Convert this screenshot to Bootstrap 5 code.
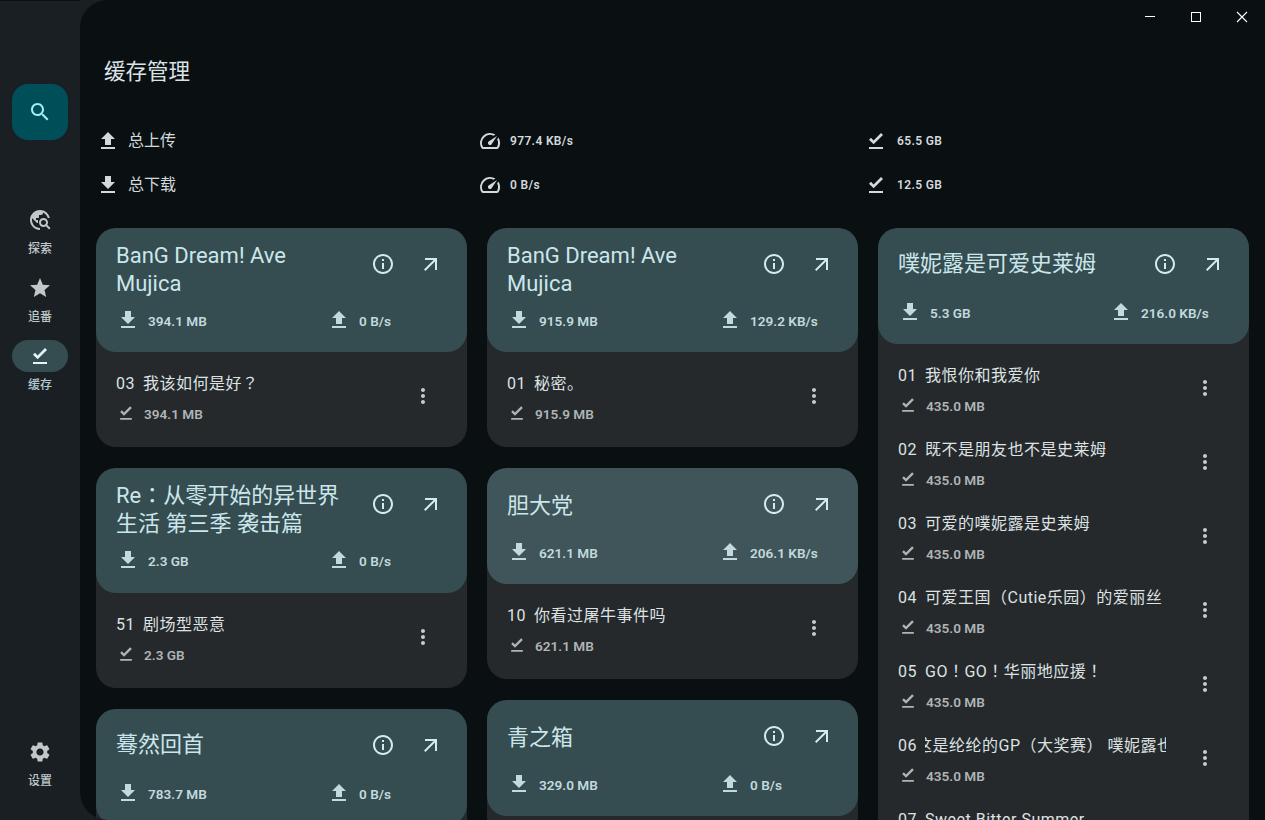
<!DOCTYPE html>
<html lang="zh-CN">
<head>
    <meta charset="UTF-8">
    <meta name="viewport" content="width=device-width, initial-scale=1.0">
    <title>缓存管理</title>
    <link href="https://cdn.jsdelivr.net/npm/bootstrap@5.3.3/dist/css/bootstrap.min.css" rel="stylesheet">
    <style>
        html, body { height: 820px; overflow: hidden; }
        body {
            background: #191f22;
            font-family: "Roboto", "Noto Sans CJK SC", sans-serif;
            color: #dfe3e4;
        }
        .ic { width: 24px; height: 24px; fill: currentColor; flex: none; display: block; }
        .punct { font-family: "Noto Sans CJK TC", sans-serif; line-height: 1; }

        /* side rail */
        .rail { width: 80px; height: 820px; flex: none; border-top: 1px solid #0c1012; }
        .fab { width: 56px; height: 56px; margin: 83px 0 0 12px; border-radius: 16px; background: #004f58; color: #9eeffd; }
        .rail-item { width: 80px; color: #c0c8ca; font-size: 12px; font-weight: 500; line-height: 16px; }
        .rail-pill { width: 56px; height: 32px; border-radius: 16px; }
        .rail-item.active { color: #b1cbd0; }
        .rail-item.active .rail-pill { background: #354c50; color: #e2f4f7; }
        .rail-label { margin-top: 5px; }
        .rail-top { margin-top: 64px; gap: 15px; }
        .rail-bottom { padding-bottom: 31px; }

        /* main panel */
        .panel {
            flex: 1;
            height: 820px;
            background: #0a0f12;
            border-radius: 28px 0 0 28px;
            border-top: 1px solid #0c1012;
            padding: 56px 0 0 16px;
            overflow: hidden;
        }
        .page-title { font-size: 21.5px; line-height: 30px; margin-left: 8px; color: #dbe3e5; }
        .totals { margin-top: 32px; display: grid; grid-template-columns: 382px 386px 1fr; }
        .total-cell { height: 44px; color: #d3dadc; }
        .total-cell .ic { margin-right: 8px; }
        .total-cjk { font-size: 16px; }
        .total-num { font-size: 12px; font-weight: 600; letter-spacing: .35px; }
        .total-done .ic { margin-right: 9px; }

        /* columns of cards */
        .board { margin-top: 21px; gap: 20px; }
        .board-col { width: 371px; gap: 21px; flex: none; }
        .task { background: #25292c; border-radius: 20px; }
        .task-head { background: #354c50; color: #c8e5ea; border-radius: 20px; padding: 12px 0 20px 20px; }
        .task-head.hovered { background: #3f5559; }
        .task-row { min-height: 48px; }
        .task-head.tall { padding-bottom: 21px; }
        .task-head.tall .task-row { min-height: 57px; }
        .task-head.tall .task-title { margin: 1px 0 -1px; }
        .task-head.tall .task-stats { margin-top: 11px; }
        .task-title { width: 240px; font-size: 22px; line-height: 28px; color: #cbe6eb; margin: 2px 0 -2px; }
        .task-head.lifted .task-title { margin: 0; }
        .task-tools { width: 111px; margin-top: 4px; height: 40px; padding-left: 15px; gap: 24px; color: #d3eaee; }
        .task-stats { margin-top: 12px; height: 24px; font-size: 13.6px; font-weight: 600; color: #c2dade; }
        .task-stats span { padding-top: 2px; }
        .stat-one { width: 211px; }
        .task-stats .ic { margin-right: 8px; }
        .task-list { padding: 7px 0 14px; }
        .ep { height: 74px; padding-left: 20px; }
        .ep-main { width: 287px; flex: none; }
        .ep-top { height: 24px; margin-top: 13px; font-size: 16px; letter-spacing: .5px; line-height: 24px; color: #dde2e3; }
        .ep-no { width: 27px; flex: none; }
        .ep-name { width: 241px; overflow: hidden; white-space: nowrap; flex: none; }
        .ep-name.scrolled span { margin-left: -9px; display: inline-block; }
        .ep-name.scrolled .punct { margin: 0; }
        .ep-size { height: 24px; margin-top: 5px; font-size: 13.6px; font-weight: 600; color: #aeb5b6; }
        .ep-size span { padding-top: 2px; }
        .ep-size .ic { width: 20px; height: 20px; margin: 0 8px 0 0; }
        .ep-more { margin-left: 8px; color: #c6cbcd; }

        /* window buttons */
        .winbtns { position: absolute; top: 0; right: 0; width: 138px; height: 32px; }
        .winbtns svg { position: absolute; top: 11px; }
    </style>
</head>
<body class="d-flex">

    <svg width="0" height="0" class="position-absolute">
        <symbol id="i-search" viewBox="0 0 24 24"><path d="M15.5 14h-.79l-.28-.27C15.41 12.59 16 11.11 16 9.5 16 5.91 13.09 3 9.5 3S3 5.91 3 9.5 5.91 16 9.5 16c1.61 0 3.09-.59 4.23-1.57l.27.28v.79l5 4.99L20.49 19l-4.99-5zm-6 0C7.01 14 5 11.99 5 9.5S7.01 5 9.5 5 14 7.01 14 9.5 11.99 14 9.5 14z"/></symbol>
        <symbol id="i-explore" viewBox="0 0 24 24"><path d="M19.3 16.9c.4-.7.7-1.5.7-2.4 0-2.5-2-4.5-4.5-4.5S11 12 11 14.5s2 4.5 4.5 4.5c.9 0 1.7-.3 2.4-.7l3.2 3.2 1.4-1.4-3.2-3.2zm-3.8.1c-1.4 0-2.5-1.1-2.5-2.5s1.1-2.5 2.5-2.5 2.5 1.1 2.5 2.5-1.1 2.5-2.5 2.5zM12 20v2C6.48 22 2 17.52 2 12S6.48 2 12 2c4.84 0 8.87 3.44 9.8 8h-2.07c-.64-2.46-2.4-4.47-4.73-5.41V5c0 1.1-.9 2-2 2h-2v2c0 .55-.45 1-1 1H8v2h2v3H9l-4.79-4.79C4.08 10.79 4 11.38 4 12c0 4.41 3.59 8 8 8z"/></symbol>
        <symbol id="i-star" viewBox="0 0 24 24"><path d="M12 17.27L18.18 21l-1.64-7.03L22 9.24l-7.19-.61L12 2 9.19 8.63 2 9.24l5.46 4.73L5.82 21z"/></symbol>
        <symbol id="i-done" viewBox="0 0 24 24"><path d="M5 18h14v2H5v-2zm4.6-2.7L5 10.7l2-1.9 2.6 2.6L17 4l2 2-9.4 9.3z"/></symbol>
        <symbol id="i-settings" viewBox="0 0 24 24"><path d="M19.14 12.94c.04-.3.06-.61.06-.94 0-.32-.02-.64-.07-.94l2.03-1.58c.18-.14.23-.41.12-.61l-1.92-3.32c-.12-.22-.37-.29-.59-.22l-2.39.96c-.5-.38-1.03-.7-1.62-.94l-.36-2.54c-.04-.24-.24-.41-.48-.41h-3.84c-.24 0-.43.17-.47.41l-.36 2.54c-.59.24-1.13.57-1.62.94l-2.39-.96c-.22-.08-.47 0-.59.22L2.74 8.87c-.12.21-.08.47.12.61l2.03 1.58c-.05.3-.09.63-.09.94s.02.64.07.94l-2.03 1.58c-.18.14-.23.41-.12.61l1.92 3.32c.12.22.37.29.59.22l2.39-.96c.5.38 1.03.7 1.62.94l.36 2.54c.05.24.24.41.48.41h3.84c.24 0 .44-.17.47-.41l.36-2.54c.59-.24 1.13-.56 1.62-.94l2.39.96c.22.08.47 0 .59-.22l1.92-3.32c.12-.22.07-.47-.12-.61l-2.01-1.58zM12 15.6c-1.98 0-3.6-1.62-3.6-3.6s1.62-3.6 3.6-3.6 3.6 1.62 3.6 3.6-1.62 3.6-3.6 3.6z"/></symbol>
        <symbol id="i-up" viewBox="0 0 24 24"><path d="M9 16h6v-6h4l-7-7-7 7h4v6zm-4 2h14v2H5v-2z"/></symbol>
        <symbol id="i-down" viewBox="0 0 24 24"><path d="M19 9h-4V3H9v6H5l7 7 7-7zM5 18v2h14v-2H5z"/></symbol>
        <symbol id="i-speed" viewBox="0 0 24 24"><path d="M20.38 8.57l-1.23 1.85a8 8 0 0 1-.22 7.58H5.07A8 8 0 0 1 15.58 6.85l1.85-1.23A10 10 0 0 0 3.35 19a2 2 0 0 0 1.72 1h13.85a2 2 0 0 0 1.74-1 10 10 0 0 0-.27-10.44zm-9.79 6.84a2 2 0 0 0 2.83 0l5.66-8.49-8.49 5.66a2 2 0 0 0 0 2.83z"/></symbol>
        <symbol id="i-info" viewBox="0 0 24 24"><path d="M11 7h2v2h-2zm0 4h2v6h-2zm1-9C6.48 2 2 6.48 2 12s4.48 10 10 10 10-4.48 10-10S17.52 2 12 2zm0 18c-4.41 0-8-3.59-8-8s3.59-8 8-8 8 3.59 8 8-3.59 8-8 8z"/></symbol>
        <symbol id="i-outward" viewBox="0 0 24 24"><path d="M6 6v2h8.59L5 17.59 6.41 19 16 9.41V18h2V6z"/></symbol>
        <symbol id="i-more" viewBox="0 0 24 24"><path d="M12 8c1.1 0 2-.9 2-2s-.9-2-2-2-2 .9-2 2 .9 2 2 2zm0 2c-1.1 0-2 .9-2 2s.9 2 2 2 2-.9 2-2-.9-2-2-2zm0 6c-1.1 0-2 .9-2 2s.9 2 2 2 2-.9 2-2-.9-2-2-2z"/></symbol>
    </svg>

    <!-- side rail -->
    <nav class="rail d-flex flex-column">
        <div class="fab d-flex align-items-center justify-content-center"><svg class="ic"><use href="#i-search"/></svg></div>
        <div class="rail-top d-flex flex-column align-items-center">
            <div class="rail-item d-flex flex-column align-items-center">
                <div class="rail-pill d-flex align-items-center justify-content-center"><svg class="ic"><use href="#i-explore"/></svg></div>
                <div class="rail-label">探索</div>
            </div>
            <div class="rail-item d-flex flex-column align-items-center">
                <div class="rail-pill d-flex align-items-center justify-content-center"><svg class="ic"><use href="#i-star"/></svg></div>
                <div class="rail-label">追番</div>
            </div>
            <div class="rail-item active d-flex flex-column align-items-center">
                <div class="rail-pill d-flex align-items-center justify-content-center"><svg class="ic"><use href="#i-done"/></svg></div>
                <div class="rail-label">缓存</div>
            </div>
        </div>
        <div class="rail-item rail-bottom d-flex flex-column align-items-center mt-auto">
            <div class="rail-pill d-flex align-items-center justify-content-center"><svg class="ic"><use href="#i-settings"/></svg></div>
            <div class="rail-label">设置</div>
        </div>
    </nav>

    <!-- main panel -->
    <main class="panel">
        <div class="page-title">缓存管理</div>

        <div class="totals">
            <div class="total-cell d-flex align-items-center"><svg class="ic"><use href="#i-up"/></svg><span class="total-cjk">总上传</span></div>
            <div class="total-cell d-flex align-items-center"><svg class="ic"><use href="#i-speed"/></svg><span class="total-num">977.4 KB/s</span></div>
            <div class="total-cell total-done d-flex align-items-center"><svg class="ic"><use href="#i-done"/></svg><span class="total-num">65.5 GB</span></div>
            <div class="total-cell d-flex align-items-center"><svg class="ic"><use href="#i-down"/></svg><span class="total-cjk">总下载</span></div>
            <div class="total-cell d-flex align-items-center"><svg class="ic"><use href="#i-speed"/></svg><span class="total-num">0 B/s</span></div>
            <div class="total-cell total-done d-flex align-items-center"><svg class="ic"><use href="#i-done"/></svg><span class="total-num">12.5 GB</span></div>
        </div>

        <div class="board d-flex" id="board"></div>
    </main>

    <div class="winbtns">
        <svg width="12" height="12" style="left:17px" fill="none" stroke="#fff"><path d="M1 5.5h10"/></svg>
        <svg width="12" height="12" style="left:63px" fill="none" stroke="#fff"><rect x="1.5" y="1.5" width="9" height="9"/></svg>
        <svg width="12" height="12" style="left:109px" fill="none" stroke="#fff" stroke-width="1.1"><path d="M1 1l10 10M11 1L1 11"/></svg>
    </div>

    <script>
        const ep435 = "435.0 MB";
        const columns = [
            [
                { title: "BanG Dream! Ave Mujica", down: "394.1 MB", up: "0 B/s", eps: [["03", "我该如何是好？", "394.1 MB"]] },
                { title: "Re：从零开始的异世界生活 第三季 袭击篇", down: "2.3 GB", up: "0 B/s", tall: true, eps: [["51", "剧场型恶意", "2.3 GB"]] },
                { title: "蓦然回首", down: "783.7 MB", up: "0 B/s", lifted: true, eps: [] }
            ],
            [
                { title: "BanG Dream! Ave Mujica", down: "915.9 MB", up: "129.2 KB/s", eps: [["01", "秘密。", "915.9 MB"]] },
                { title: "胆大党", down: "621.1 MB", up: "206.1 KB/s", hovered: true, eps: [["10", "你看过屠牛事件吗", "621.1 MB"]] },
                { title: "青之箱", down: "329.0 MB", up: "0 B/s", eps: [] }
            ],
            [
                { title: "噗妮露是可爱史莱姆", down: "5.3 GB", up: "216.0 KB/s", lifted: true, eps: [
                    ["01", "我恨你和我爱你", ep435],
                    ["02", "既不是朋友也不是史莱姆", ep435],
                    ["03", "可爱的噗妮露是史莱姆", ep435],
                    ["04", "可爱王国（Cutie乐园）的爱丽丝", ep435],
                    ["05", "GO！GO！华丽地应援！", ep435],
                    ["06", "这是纶纶的GP（大奖赛） 噗妮露也", ep435, true],
                    ["07", "Sweet Bitter Summer", ep435]
                ] }
            ]
        ];

        function icon(name) {
            return `<svg class="ic"><use href="#i-${name}"/></svg>`;
        }

        // full-width ！？： sit centred in the reference, the TC cut draws them that way
        function punct(text) {
            return text.replace(/[！？：]/g, m => `<span class="punct" lang="zh-TW">${m}</span>`);
        }

        function renderEp(ep) {
            return `
                <div class="ep d-flex">
                    <div class="ep-main">
                        <div class="ep-top d-flex">
                            <div class="ep-no">${ep[0]}</div>
                            <div class="ep-name ${ep[3] ? "scrolled" : ""}"><span>${punct(ep[1])}</span></div>
                        </div>
                        <div class="ep-size d-flex align-items-center">${icon("done")}<span>${ep[2]}</span></div>
                    </div>
                    <div class="ep-more d-flex align-items-center">${icon("more")}</div>
                </div>`;
        }

        function renderTask(task) {
            let flags = [task.hovered && "hovered", task.tall && "tall", task.lifted && "lifted"].filter(Boolean).join(" ");
            return `
                <div class="task">
                    <div class="task-head ${flags}">
                        <div class="task-row d-flex align-items-center">
                            <div class="task-title">${punct(task.title)}</div>
                            <div class="task-tools d-flex align-items-center align-self-start">${icon("info")}${icon("outward")}</div>
                        </div>
                        <div class="task-stats d-flex align-items-center">
                            <div class="stat-one d-flex align-items-center">${icon("down")}<span>${task.down}</span></div>
                            <div class="d-flex align-items-center">${icon("up")}<span>${task.up}</span></div>
                        </div>
                    </div>
                    <div class="task-list">${task.eps.map(renderEp).join("")}</div>
                </div>`;
        }

        document.getElementById("board").innerHTML = columns.map(col =>
            `<div class="board-col d-flex flex-column">${col.map(renderTask).join("")}</div>`
        ).join("");
    </script>

    <script src="https://cdn.jsdelivr.net/npm/bootstrap@5.3.3/dist/js/bootstrap.bundle.min.js"></script>
</body>
</html>
